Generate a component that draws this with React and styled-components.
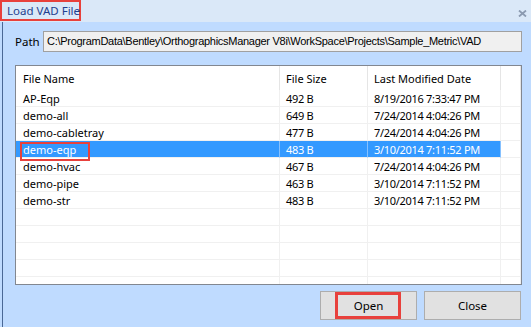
import React from "react";
import styled, { createGlobalStyle } from "styled-components";

const Global = createGlobalStyle`
  html, body { margin: 0; padding: 0; background: #bfdbff; }
  body { width: 531px; height: 327px; overflow: hidden; }
  * { box-sizing: border-box; }
`;

const Window = styled.div`
  width: 531px;
  height: 327px;
  display: flex;
  flex-direction: column;
  background: #bfdbff;
  font-family: "Noto Sans", "Open Sans", sans-serif;
`;

const TitleBar = styled.div`
  height: 22px;
  flex: none;
  display: flex;
  align-items: flex-start;
  justify-content: space-between;
  background: #dae8f8;
`;

const Title = styled.div`
  height: 21px;
  width: 81px;
  border: 2px solid #e8413c;
  padding-left: 5px;
  font-size: 11.5px;
  line-height: 17px;
  color: #1f3f8f;
  white-space: nowrap;
`;

const CloseGlyph = styled.svg`
  margin: 10px 4px 0 0;
`;

const Body = styled.div`
  flex: 1;
  margin-left: 2px;
  border-left: 1px solid #4a6896;
  padding: 9px 9px 0 12px;
  display: flex;
  flex-direction: column;
`;

const PathRow = styled.div`
  display: flex;
  align-items: center;
  height: 21px;
`;

const Label = styled.div`
  width: 28px;
  font-size: 11.5px;
  color: #000;
`;

const PathBox = styled.div`
  flex: 1;
  height: 21px;
  background: #f0f0f0;
  border: 1px solid #a0a0a0;
  padding-left: 3px;
  font-family: "Liberation Sans", Arial, sans-serif;
  font-size: 11px;
  letter-spacing: -0.28px;
  line-height: 19px;
  color: #000;
  white-space: nowrap;
  overflow: hidden;
`;

const List = styled.div`
  margin-top: 13px;
  height: 220px;
  background: #fff;
  border: 1px solid #828790;
  overflow: hidden;
`;

const Grid = styled.div`
  display: grid;
  grid-template-columns: 264px 88px 133px 1fr;
`;

const HeaderCell = styled.div`
  height: 24px;
  padding-left: ${(p) => p.$pad}px;
  border-right: 1px solid #e5e5e5;
  font-size: 11px;
  line-height: 26px;
  color: #000;
  white-space: nowrap;
`;

const Cell = styled.div`
  position: relative;
  height: 17px;
  padding-left: ${(p) => p.$pad}px;
  border-right: 1px solid ${(p) => (p.$sel ? "#86c1ff" : "#f0f0f0")};
  border-bottom: 1px solid #f0f0f0;
  background: ${(p) => (p.$sel ? "#3399ff" : "transparent")};
  color: ${(p) => (p.$sel ? "#fff" : "#000")};
  font-size: 11px;
  letter-spacing: ${(p) => (p.$tight ? "-0.3px" : "0")};
  line-height: 17px;
  white-space: nowrap;
`;

const Mark = styled.div`
  position: absolute;
  left: 4px;
  top: 1px;
  width: 70px;
  height: 19px;
  border: 2px solid #e8413c;
  pointer-events: none;
`;

const Buttons = styled.div`
  margin-top: 6px;
  display: flex;
  justify-content: flex-end;
  gap: 7px;
  padding-right: 1px;
`;

const Button = styled.div`
  position: relative;
  width: 97px;
  height: 29px;
  background: #e1e1e1;
  border: 1px solid #adadad;
  display: flex;
  align-items: center;
  justify-content: center;
  font-size: 11.5px;
  color: #000;
`;

const ButtonMark = styled.div`
  position: absolute;
  left: 14px;
  top: 0;
  width: 66px;
  height: 27px;
  border: 3px solid #e8413c;
`;

const rows = [
  ["AP-Eqp", "492 B", "8/19/2016 7:33:47 PM"],
  ["demo-all", "649 B", "7/24/2014 4:04:26 PM"],
  ["demo-cabletray", "477 B", "7/24/2014 4:04:26 PM"],
  ["demo-eqp", "483 B", "3/10/2014 7:11:52 PM"],
  ["demo-hvac", "467 B", "7/24/2014 4:04:26 PM"],
  ["demo-pipe", "463 B", "3/10/2014 7:11:52 PM"],
  ["demo-str", "483 B", "3/10/2014 7:11:52 PM"],
  ["", "", ""],
  ["", "", ""],
  ["", "", ""],
  ["", "", ""],
  ["", "", ""],
];

export default function App() {
  return (
    <>
      <Global />
      <Window>
        <TitleBar>
          <Title>Load VAD File</Title>
          <CloseGlyph width="9" height="7" viewBox="0 0 9 7">
            <path d="M1 0.5 L8 6.5 M8 0.5 L1 6.5" stroke="#8b9ab0" strokeWidth="1.8" />
          </CloseGlyph>
        </TitleBar>
        <Body>
          <PathRow>
            <Label>Path</Label>
            <PathBox>
              C:\ProgramData\Bentley\OrthographicsManager V8i\WorkSpace\Projects\Sample_Metric\VAD
            </PathBox>
          </PathRow>
          <List>
            <Grid>
              <HeaderCell $pad={7}>File Name</HeaderCell>
              <HeaderCell $pad={6}>File Size</HeaderCell>
              <HeaderCell $pad={6}>Last Modified Date</HeaderCell>
              <HeaderCell $pad={0} />
              {rows.map((r, i) => {
                const sel = r[0] === "demo-eqp";
                return (
                  <React.Fragment key={i}>
                    <Cell $pad={7} $sel={sel}>
                      {r[0]}
                      {sel && <Mark />}
                    </Cell>
                    <Cell $pad={6} $sel={sel} $tight>{r[1]}</Cell>
                    <Cell $pad={6} $sel={sel} $tight>{r[2]}</Cell>
                    <Cell $pad={0} />
                  </React.Fragment>
                );
              })}
            </Grid>
          </List>
          <Buttons>
            <Button>
              Open
              <ButtonMark />
            </Button>
            <Button>Close</Button>
          </Buttons>
        </Body>
      </Window>
    </>
  );
}
